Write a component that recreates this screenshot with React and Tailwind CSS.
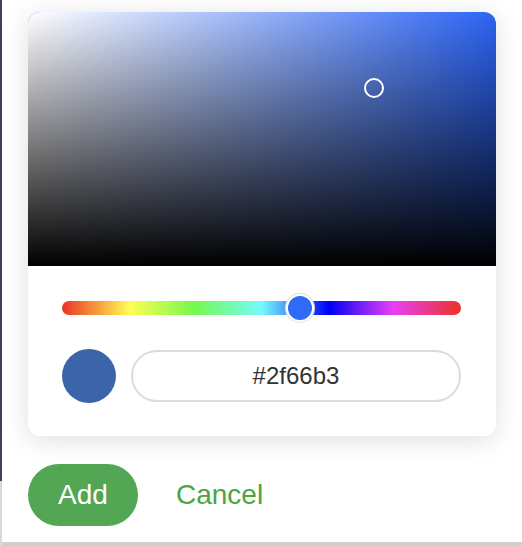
import React, { useState } from 'react';

const HUE_STOPS = 'linear-gradient(to right,#ea3323 0%,#fffe54 17%,#75f94c 33%,#74fbfd 50%,#0000f5 67%,#ea3ff7 83%,#ea3323 100%)';

export default function App() {
  const [hex, setHex] = useState('#2f66b3');

  // saturation / value of #2f66b3
  const sat = 0.74;
  const val = 0.7;
  const hue = 215 / 360;

  return (
    <div className="flex w-[522px] h-[546px] bg-[#cfcfcf] font-['Liberation_Sans',Arial,sans-serif]">
      {/* page behind the popover */}
      <div className="flex flex-col w-[2px] h-full">
        <div className="h-[481px] bg-[#3b4157]" />
        <div className="flex-1 bg-[#d9d9d9]" />
      </div>

      {/* popover */}
      <div className="flex-1 h-[542px] bg-white px-[26px] pt-[12px]">
        <div className="w-[468px] rounded-xl bg-white shadow-[0_4px_26px_rgba(0,0,0,0.13)] overflow-hidden">
          {/* saturation area */}
          <div className="relative h-[254px] bg-[#2c64f4]">
            <div className="absolute inset-0 bg-[linear-gradient(to_right,#fff,rgba(255,255,255,0))]" />
            <div className="absolute inset-0 bg-[linear-gradient(to_bottom,rgba(0,0,0,0),#000)]" />
            <div
              className="absolute w-[20px] h-[20px] -ml-[10px] -mt-[10px] rounded-full border-2 border-white"
              style={{ left: `${sat * 100}%`, top: `${(1 - val) * 100}%` }}
            />
          </div>

          <div className="pl-[34px] pr-[35px] pt-[35px] pb-[33px]">
            {/* hue slider */}
            <div className="relative h-[14px] rounded-full" style={{ backgroundImage: HUE_STOPS }}>
              <div
                className="absolute top-1/2 w-[28px] h-[28px] -ml-[14px] -mt-[14px] rounded-full bg-[#2f6bf5] border-2 border-white ring-1 ring-[#dedede]"
                style={{ left: `${hue * 100}%` }}
              />
            </div>

            {/* swatch + hex */}
            <div className="flex items-center gap-[15px] mt-[34px]">
              <div className="w-[54px] h-[54px] rounded-full bg-[#3b64aa] shrink-0" />
              <input
                value={hex}
                onChange={(e) => setHex(e.target.value)}
                className="flex-1 min-w-0 h-[52px] rounded-full border-2 border-[#dcdcdc] bg-white text-center text-[24px] text-[#333] outline-none"
              />
            </div>
          </div>
        </div>

        {/* actions */}
        <div className="flex items-center mt-[28px]">
          <button className="w-[110px] h-[62px] rounded-full bg-[#53a653] text-white text-[28px]">Add</button>
          <button className="ml-[38px] text-[28px] text-[#4aa640]">Cancel</button>
        </div>
      </div>
    </div>
  );
}
